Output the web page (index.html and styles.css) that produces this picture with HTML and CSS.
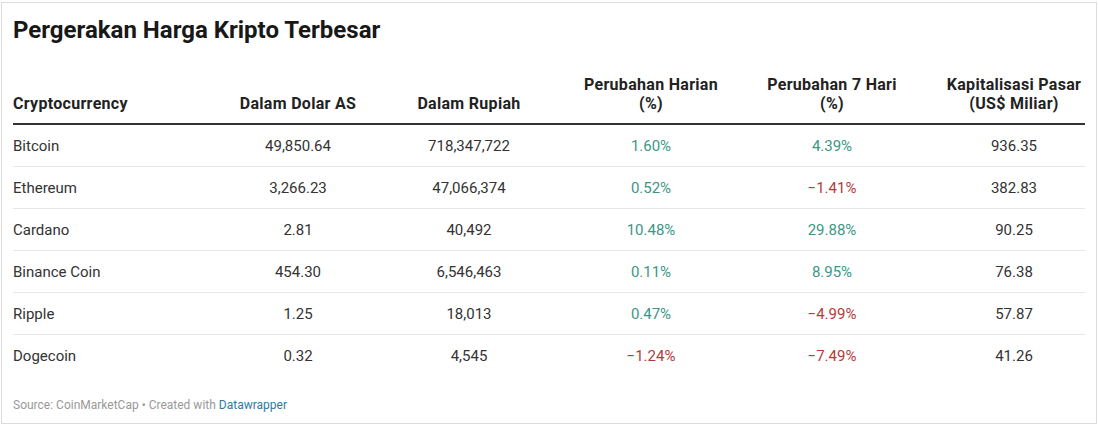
FILE: index.html
```html
<!DOCTYPE html>
<html>
<head>
<meta charset="utf-8">
<link rel="stylesheet" href="styles.css">
</head>
<body>
<div class="frame">
  <h1 class="title">Pergerakan Harga Kripto Terbesar</h1>
  <div class="table">
    <div class="row head">
      <div class="cell left">Cryptocurrency</div>
      <div class="cell">Dalam Dolar AS</div>
      <div class="cell">Dalam Rupiah</div>
      <div class="cell">Perubahan Harian<br>(%)</div>
      <div class="cell">Perubahan 7 Hari<br>(%)</div>
      <div class="cell">Kapitalisasi Pasar<br>(US$ Miliar)</div>
    </div>
    <div class="row">
      <div class="cell left">Bitcoin</div>
      <div class="cell">49,850.64</div>
      <div class="cell">718,347,722</div>
      <div class="cell up">1.60%</div>
      <div class="cell up">4.39%</div>
      <div class="cell">936.35</div>
    </div>
    <div class="row">
      <div class="cell left">Ethereum</div>
      <div class="cell">3,266.23</div>
      <div class="cell">47,066,374</div>
      <div class="cell up">0.52%</div>
      <div class="cell down">−1.41%</div>
      <div class="cell">382.83</div>
    </div>
    <div class="row">
      <div class="cell left">Cardano</div>
      <div class="cell">2.81</div>
      <div class="cell">40,492</div>
      <div class="cell up">10.48%</div>
      <div class="cell up">29.88%</div>
      <div class="cell">90.25</div>
    </div>
    <div class="row">
      <div class="cell left">Binance Coin</div>
      <div class="cell">454.30</div>
      <div class="cell">6,546,463</div>
      <div class="cell up">0.11%</div>
      <div class="cell up">8.95%</div>
      <div class="cell">76.38</div>
    </div>
    <div class="row">
      <div class="cell left">Ripple</div>
      <div class="cell">1.25</div>
      <div class="cell">18,013</div>
      <div class="cell up">0.47%</div>
      <div class="cell down">−4.99%</div>
      <div class="cell">57.87</div>
    </div>
    <div class="row last">
      <div class="cell left">Dogecoin</div>
      <div class="cell">0.32</div>
      <div class="cell">4,545</div>
      <div class="cell down">−1.24%</div>
      <div class="cell down">−7.49%</div>
      <div class="cell">41.26</div>
    </div>
  </div>
  <div class="footer">Source: CoinMarketCap • Created with <a class="dw" href="#">Datawrapper</a></div>
</div>
</body>
</html>
```

FILE: styles.css
```css
html, body {
  margin: 0;
  padding: 0;
  background: #ffffff;
}
body {
  padding: 2px 0 0 1px;
  font-family: Roboto, "Liberation Sans", sans-serif;
  color: #333333;
}
.frame {
  box-sizing: border-box;
  width: 1096px;
  height: 422px;
  border: 1px solid #dcdcdc;
  padding: 0 11px 0 11px;
  display: flex;
  flex-direction: column;
}
.title {
  margin: 12px 0 0 0;
  font-size: 24px;
  font-weight: 700;
  line-height: 30px;
  color: #181818;
}
.table {
  margin-top: 30px;
  display: flex;
  flex-direction: column;
}
.row {
  display: grid;
  grid-template-columns: 225px 120px 222px 142px 220px 144px;
  height: 42px;
  align-items: center;
  border-bottom: 1px solid #e6e6e6;
  box-sizing: border-box;
  font-size: 15px;
}
.row.last {
  border-bottom: none;
}
.row.head {
  height: auto;
  align-items: end;
  padding-bottom: 10px;
  border-bottom: 2px solid #333333;
  font-size: 16px;
  font-weight: 700;
  letter-spacing: 0.3px;
  line-height: 19px;
  color: #222222;
}
.cell {
  text-align: center;
  white-space: nowrap;
}
.cell.left {
  text-align: left;
}
.up {
  color: #3d9686;
}
.down {
  color: #b53a3a;
}
.footer {
  margin-top: 21px;
  font-size: 12px;
  line-height: 14px;
  color: #999999;
}
.dw {
  color: #2a7ca3;
  text-decoration: none;
}
```
